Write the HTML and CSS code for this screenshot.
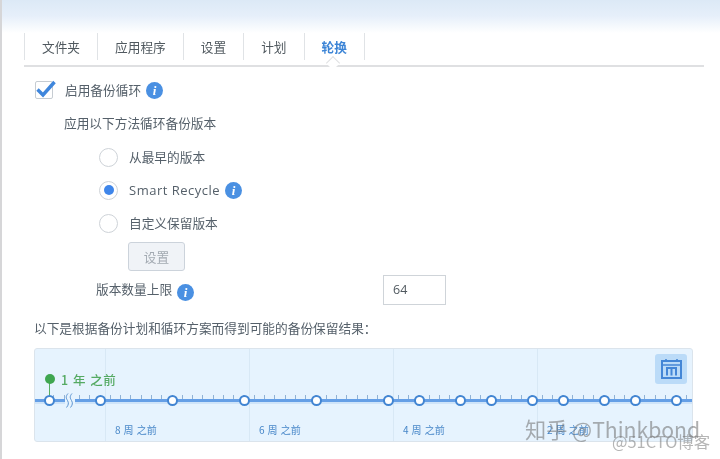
FILE: index.html
```html
<!DOCTYPE html>
<html lang="zh">
<head>
<meta charset="utf-8">
<title>轮换</title>
<link rel="stylesheet" href="styles.css">
</head>
<body>
<div class="window">
  <div class="tabs">
    <div class="tab">文件夹</div>
    <div class="tab">应用程序</div>
    <div class="tab">设置</div>
    <div class="tab">计划</div>
    <div class="tab active">轮换</div>
  </div>
  <div class="content">
    <div class="enable-row">
      <span class="checkbox"><svg width="22" height="20" viewBox="0 0 22 20"><path d="M2.5 10.5 L8 16 L19.5 3" fill="none" stroke="#3f86dc" stroke-width="3.4"/></svg></span>
      <span class="label">启用备份循环</span>
      <span class="info"><i>i</i></span>
    </div>
    <div class="method-title">应用以下方法循环备份版本</div>
    <div class="radios">
      <div class="radio-row"><span class="radio"></span><span class="label">从最早的版本</span></div>
      <div class="radio-row"><span class="radio checked"></span><span class="label latin">Smart Recycle</span><span class="info"><i>i</i></span></div>
      <div class="radio-row"><span class="radio"></span><span class="label">自定义保留版本</span></div>
    </div>
    <div class="btn">设置</div>
    <div class="limit-row">
      <div class="limit-label"><span class="label">版本数量上限</span><span class="info"><i>i</i></span></div>
      <div class="input">64</div>
    </div>
    <div class="result-title">以下是根据备份计划和循环方案而得到可能的备份保留结果：</div>
    <div class="timeline">
      <div class="grid g1"></div><div class="grid g2"></div><div class="grid g3"></div><div class="grid g4"></div>
      <div class="band"></div>
      <div class="ticks"></div>
      <div class="tick t0"></div><div class="tick t1"></div>
      <div class="line"></div>
      <svg class="break" width="10" height="15" viewBox="0 0 10 15"><path d="M3 0.5 C0.5 3.5 1 5 2.5 7.5 C4 10 3.5 12 1.5 14.5 M7 0.5 C4.5 3.5 5 5 6.5 7.5 C8 10 7.5 12 5.5 14.5" fill="none" stroke="#5d94d0" stroke-width="1"/></svg>
      <div class="stem"></div>
      <div class="pin"></div>
      <div class="year">1 年 之前</div>
      <span class="node n1"></span><span class="node n2"></span><span class="node n3"></span><span class="node n4"></span><span class="node n5"></span><span class="node n6"></span><span class="node n7"></span><span class="node n8"></span><span class="node n9"></span><span class="node n10"></span><span class="node n11"></span><span class="node n12"></span><span class="node n13"></span><span class="node n14"></span>
      <div class="week w1">8 周 之前</div>
      <div class="week w2">6 周 之前</div>
      <div class="week w3">4 周 之前</div>
      <div class="week w4">2 周 之前</div>
      <div class="cal">
        <svg width="21" height="20" viewBox="0 0 21 20"><path d="M5 0v3M16 0v3" stroke="#4486d6" stroke-width="1.6" fill="none"/><rect x="1" y="2" width="19" height="17" fill="none" stroke="#4486d6" stroke-width="2"/><path d="M1 6h19" stroke="#4486d6" stroke-width="1.6"/><path d="M6 16.5v-7.5h9v7.5M10.5 9v7.5" fill="none" stroke="#4486d6" stroke-width="2"/></svg>
      </div>
    </div>
  </div>
  <div class="wm-zhihu">知乎 @Thinkbond</div>
  <div class="wm-cto">@51CTO博客</div>
</div>
</body>
</html>
```
FILE: styles.css
```css
* { box-sizing: border-box; }
html, body { margin: 0; padding: 0; background: #fff; }
body {
  width: 720px;
  height: 459px;
  overflow: hidden;
  font-family: "Noto Sans CJK SC", "Noto Sans", sans-serif;
  font-size: 12.7px;
  color: #55606a;
}
.window {
  position: relative;
  width: 720px;
  height: 459px;
  padding: 33px 16px 0 22px;
  border-left: 2px solid #d6d6d8;
  background: linear-gradient(180deg, #dce9f6 0, #e6effa 16px, #fff 33px) no-repeat;
  background-size: 100% 33px;
  filter: blur(0.35px);
}
.tabs {
  display: flex;
  height: 34px;
  border-bottom: 2px solid #dfe0e2;
  position: relative;
  padding-bottom: 6px;
}
.tab {
  height: 27px;
  line-height: 27px;
  padding: 0 17px;
  border-left: 1px solid #e0e3e6;
  text-align: center;
  color: #50595f;
}
.tab.active {
  color: #3d85d6;
  font-weight: 700;
  border-right: 1px solid #e0e3e6;
}
.tab.active::after {
  content: "";
  position: absolute;
  left: 304px;
  bottom: -3px;
  width: 9px;
  height: 9px;
  background: #fff;
  border-left: 1px solid #dfe0e2;
  border-top: 1px solid #dfe0e2;
  transform: rotate(45deg);
}
.content { padding-left: 11px; }
.enable-row {
  display: flex;
  align-items: center;
  margin-top: 13px;
  height: 20px;
}
.checkbox {
  width: 18px;
  height: 18px;
  border: 1px solid #c6ccd2;
  border-radius: 2px;
  background: #fff;
  position: relative;
  flex: none;
}
.checkbox svg { position: absolute; left: -1px; top: -3px; }
.enable-row .label { margin-left: 12px; }
.label { line-height: 20px; }
.info {
  display: inline-flex;
  align-items: center;
  justify-content: center;
  width: 17px;
  height: 17px;
  border-radius: 50%;
  background: #4a90e2;
  margin-left: 5px;
  flex: none;
}
.info i {
  color: #fff;
  font-family: "Liberation Serif", serif;
  font-weight: 700;
  font-size: 13px;
  line-height: 17px;
}
.method-title { margin: 13px 0 0 29px; line-height: 20px; }
.radios { margin: 14px 0 0 64px; display: flex; flex-direction: column; gap: 13px; }
.radio-row { display: flex; align-items: center; height: 20px; }
.radio {
  width: 19px;
  height: 19px;
  border-radius: 50%;
  border: 1px solid #cdd2d7;
  background: #fff;
  margin-right: 11px;
  flex: none;
  position: relative;
}
.radio.checked::after {
  content: "";
  position: absolute;
  left: 3.5px;
  top: 3.5px;
  width: 10px;
  height: 10px;
  border-radius: 50%;
  background: #3f86ea;
}
.latin { font-family: "Open Sans", "Noto Sans", sans-serif; letter-spacing: 0.5px; font-size: 13px; }
.btn {
  width: 57px;
  height: 29px;
  margin: 9px 0 0 93px;
  background: #f0f3f7;
  border: 1px solid #ccd3db;
  border-radius: 3px;
  text-align: center;
  line-height: 27px;
  color: #a3aab2;
}
.limit-row { display: flex; margin-top: 4px; height: 30px; }
.limit-label { display: flex; align-items: flex-start; width: 348px; padding: 4px 0 0 61px; }
.limit-label .info { margin: 5px 0 0 5px; }
.input {
  width: 63px;
  height: 30px;
  border: 1px solid #cfd4d9;
  line-height: 28px;
  padding-left: 9px;
  color: #50595f;
  font-family: "Open Sans", sans-serif;
  font-size: 12.5px;
}
.result-title { margin: 13px 0 0 -1px; line-height: 20px; }
.timeline {
  position: relative;
  margin: 10px 0 0 -1px;
  width: 659px;
  height: 94px;
  background: #e6f3fe;
  border: 1px solid #dbe4ec;
  border-radius: 3px;
  overflow: hidden;
}
.grid { position: absolute; top: 0; bottom: 0; width: 1px; background: #d8e8f5; }
.g1 { left: 70px; } .g2 { left: 214px; } .g3 { left: 358px; } .g4 { left: 502px; }
.band { position: absolute; left: 0; right: 0; top: 50px; height: 5px; background: #cfe4f9; }
.ticks {
  position: absolute;
  left: 44px;
  right: 0;
  top: 46px;
  height: 4px;
  background: repeating-linear-gradient(90deg, #8fb2d6 0, #8fb2d6 1px, transparent 1px, transparent 10.28px);
}
.tick { position: absolute; top: 46px; width: 1px; height: 4px; background: #8fb2d6; }
.t0 { left: 18px; } .t1 { left: 29px; }
.line { position: absolute; left: 0; right: 0; top: 50px; height: 3px; background: #659fe6; }
.break { position: absolute; left: 30px; top: 44px; background: #e6f3fe; }
.stem { position: absolute; left: 14px; top: 31px; width: 1px; height: 20px; background: #57ad62; }
.pin { position: absolute; left: 9.5px; top: 25px; width: 10px; height: 10px; border-radius: 50%; background: #3fa650; }
.year { position: absolute; left: 26px; top: 21px; line-height: 20px; color: #55aa63; font-size: 12.5px; font-weight: 500; letter-spacing: 0.6px; word-spacing: 0.8px; }
.node {
  position: absolute;
  top: 45.5px;
  width: 11px;
  height: 11px;
  margin-left: -5.5px;
  border-radius: 50%;
  background: #fff;
  border: 2.5px solid #4285d2;
}
.n1 { left: 14px; } .n2 { left: 65px; } .n3 { left: 137px; } .n4 { left: 209px; } .n5 { left: 281px; }
.n6 { left: 353px; } .n7 { left: 384px; } .n8 { left: 425px; } .n9 { left: 456px; } .n10 { left: 497px; }
.n11 { left: 528px; } .n12 { left: 569px; } .n13 { left: 600px; } .n14 { left: 641px; }
.week { position: absolute; top: 73px; line-height: 16px; font-size: 10px; color: #4686c8; letter-spacing: 0.1px; word-spacing: 0.6px; }
.w1 { left: 80px; } .w2 { left: 224px; } .w3 { left: 368px; } .w4 { left: 512px; }
.cal {
  position: absolute;
  right: 5px;
  top: 5px;
  width: 32px;
  height: 30px;
  background: #bbdbf8;
  border-radius: 3px;
  display: flex;
  align-items: center;
  justify-content: center;
}
.wm-zhihu {
  position: absolute;
  left: 523px;
  top: 414px;
  font-size: 21.2px;
  line-height: 30px;
  color: rgba(110, 110, 110, 0.55);
  white-space: nowrap;
}
.wm-cto {
  position: absolute;
  left: 610px;
  top: 430px;
  font-size: 16.4px;
  line-height: 22px;
  color: rgba(120, 120, 120, 0.55);
  white-space: nowrap;
}
```
